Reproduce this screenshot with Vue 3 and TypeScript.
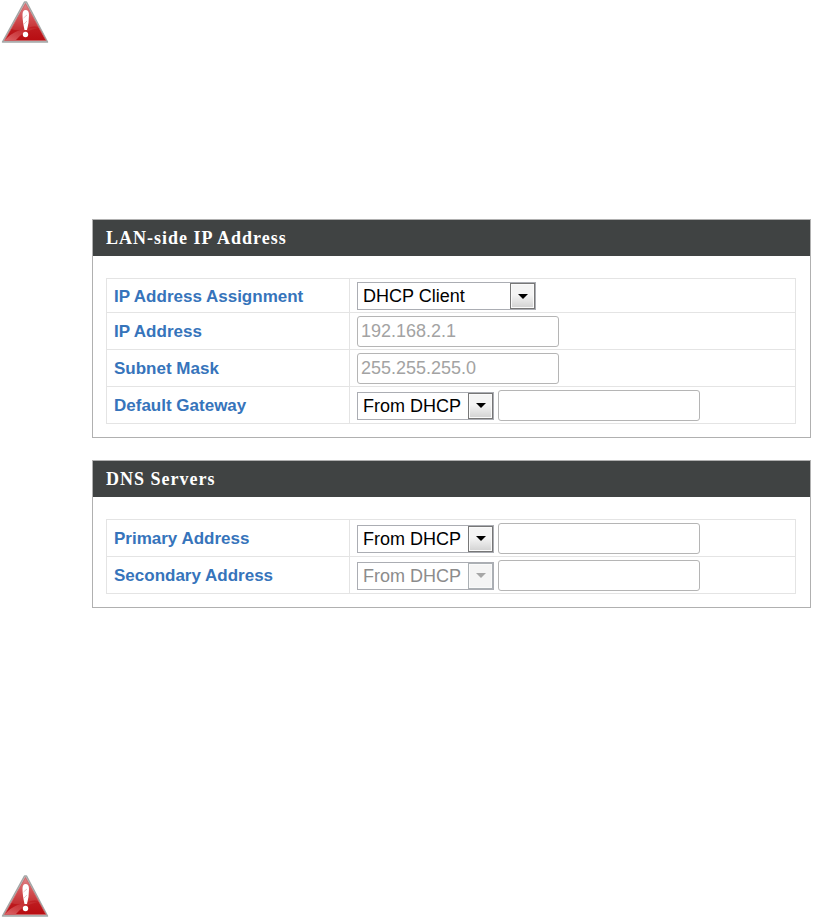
<script setup lang="ts">
import { ref } from 'vue'

interface Field {
  id: string
  label: string
  select?: { options: string[]; wide?: boolean; disabled?: boolean }
  input?: { disabled?: boolean }
}

interface Panel {
  title: string
  fields: Field[]
}

const panels: Panel[] = [
  {
    title: 'LAN-side IP Address',
    fields: [
      { id: 'assignment', label: 'IP Address Assignment', select: { options: ['DHCP Client'], wide: true } },
      { id: 'ip', label: 'IP Address', input: { disabled: true } },
      { id: 'mask', label: 'Subnet Mask', input: { disabled: true } },
      { id: 'gateway', label: 'Default Gateway', select: { options: ['From DHCP'] }, input: { disabled: true } },
    ],
  },
  {
    title: 'DNS Servers',
    fields: [
      { id: 'primary', label: 'Primary Address', select: { options: ['From DHCP'] }, input: { disabled: true } },
      { id: 'secondary', label: 'Secondary Address', select: { options: ['From DHCP'], disabled: true }, input: { disabled: true } },
    ],
  },
]

const choices = ref<Record<string, string>>({
  assignment: 'DHCP Client',
  gateway: 'From DHCP',
  primary: 'From DHCP',
  secondary: 'From DHCP',
})

const addresses = ref<Record<string, string>>({
  ip: '192.168.2.1',
  mask: '255.255.255.0',
  gateway: '',
  primary: '',
  secondary: '',
})
</script>

<template>
  <svg width="0" height="0" class="defs" aria-hidden="true">
    <defs>
      <linearGradient id="warn-red" x1="0" y1="0" x2="0" y2="1">
        <stop offset="0" stop-color="#e0858a" />
        <stop offset="0.4" stop-color="#cf3f43" />
        <stop offset="0.7" stop-color="#bd1a1e" />
        <stop offset="1" stop-color="#b80d12" />
      </linearGradient>
      <linearGradient id="warn-shine" x1="0" y1="1" x2="1" y2="0">
        <stop offset="0" stop-color="#e88083" stop-opacity="0.75" />
        <stop offset="1" stop-color="#d04a4c" stop-opacity="0.2" />
      </linearGradient>
      <symbol id="warning" viewBox="0 0 50 44">
        <path d="M26.500 2 L47.500 42 H2.500 L24.500 2 Z" fill="#c9c4c4" stroke="#a3a6a6" stroke-width="1.500" stroke-linejoin="round" />
        <path d="M25.500 3.500 L46 40.500 H4.500 Z" fill="url(#warn-red)" stroke="#cd5d60" stroke-width="0.800" stroke-linejoin="round" />
        <path d="M11 29 Q20 32 28 28 Q37 24 39 29 L35 21 L25.500 5 Z" fill="#e28a8d" opacity="0.2" />
        <path d="M5 40 Q16 27 38 28 Q23 31 16 40 Z" fill="url(#warn-shine)" />
        <path d="M25.500 10 Q29 10 29 15 Q29 23 27 30 H24.500 Q22.500 21 22.500 15 Q22.500 10 25.500 10 Z" fill="#fff" />
        <path d="M23.500 18 L27 15 M24 24 L27 21" stroke="#ebc8c9" stroke-width="1" />
        <circle cx="25.500" cy="34.500" r="2.700" fill="#fff" />
      </symbol>
    </defs>
  </svg>

  <main class="page">
    <svg class="warning" role="img" aria-label="Warning"><use href="#warning" /></svg>

    <form class="panels" @submit.prevent>
      <section v-for="panel in panels" :key="panel.title" class="panel">
        <h2 class="title">{{ panel.title }}</h2>
        <div class="body">
          <table class="fields">
            <tbody>
              <tr v-for="field in panel.fields" :key="field.id">
                <th scope="row"><label :for="field.id">{{ field.label }}</label></th>
                <td>
                  <div class="controls">
                    <span v-if="field.select" class="picker" :class="{ wide: field.select.wide, off: field.select.disabled }">
                      <select :id="field.id" v-model="choices[field.id]" :disabled="field.select.disabled">
                        <option v-for="option in field.select.options" :key="option">{{ option }}</option>
                      </select>
                      <span class="arrow" aria-hidden="true">
                        <svg width="10" height="5" viewBox="0 0 10 5"><path d="M0 0 H10 L5 5 Z" fill="currentColor" /></svg>
                      </span>
                    </span>
                    <input
                      v-if="field.input"
                      :id="field.select ? field.id + '-address' : field.id"
                      v-model="addresses[field.id]"
                      type="text"
                      :aria-label="field.label"
                      :disabled="field.input.disabled"
                    />
                  </div>
                </td>
              </tr>
            </tbody>
          </table>
        </div>
      </section>
    </form>

    <svg class="warning" role="img" aria-label="Warning"><use href="#warning" /></svg>
  </main>
</template>

<style>
body {
  background: #fff;
}
</style>

<style scoped>
.defs {
  position: absolute;
}

.page {
  display: flex;
  flex-direction: column;
  font-family: "Liberation Sans", Arial, sans-serif;
}

.warning {
  width: 50px;
  height: 44px;
}

.panels {
  display: flex;
  flex-direction: column;
  gap: 22px;
  margin: 175px 12px 266px 92px;
}

.panel {
  border: 1px solid #b0b0b0;
}

.title {
  margin: 0;
  padding: 0 13px;
  background: #404343;
  color: #fff;
  font: bold 18px/36px "Liberation Serif", "Times New Roman", serif;
  letter-spacing: 1px;
}

.body {
  padding: 22px 14px 13px 13px;
}

.fields {
  width: 100%;
  table-layout: fixed;
  border-collapse: collapse;
}

th,
td {
  border: 1px solid #e4e4e4;
}

th {
  width: 243px;
  box-sizing: border-box;
  padding: 2px 7px 0;
  color: #3674bb;
  font-size: 17px;
  line-height: 20px;
  text-align: left;
}

td {
  padding: 3px 7px 2px;
}

.controls {
  display: flex;
  align-items: center;
  gap: 4px;
}

.picker {
  display: grid;
  width: 137px;
  height: 28px;
}

.picker.wide {
  width: 179px;
}

select,
input {
  box-sizing: border-box;
  margin: 0;
  background: #fff;
  font-family: inherit;
  font-size: 18px;
  opacity: 1;
}

select {
  grid-area: 1 / 1;
  width: 100%;
  height: 100%;
  padding: 0 24px 0 5px;
  appearance: none;
  border: 1px solid #abadb3;
  border-radius: 0;
  color: #000;
}

.arrow {
  grid-area: 1 / 1;
  justify-self: end;
  display: flex;
  align-items: center;
  justify-content: center;
  box-sizing: border-box;
  width: 25px;
  margin: 1px;
  border: 1px solid #777;
  box-shadow: inset 0 0 0 1px #fafafa;
  background: linear-gradient(#f4f4f4 45%, #d2d2d2);
  color: #000;
  pointer-events: none;
}

.off select {
  color: #8c8c8c;
}

.off .arrow {
  border-color: #abb0b4;
  background: #f4f4f4;
  color: #a6a6a6;
}

input {
  width: 202px;
  height: 31px;
  padding: 0 3px;
  border: 1px solid #b5b5b5;
  border-radius: 3px;
  color: #a3a3a3;
}
</style>
